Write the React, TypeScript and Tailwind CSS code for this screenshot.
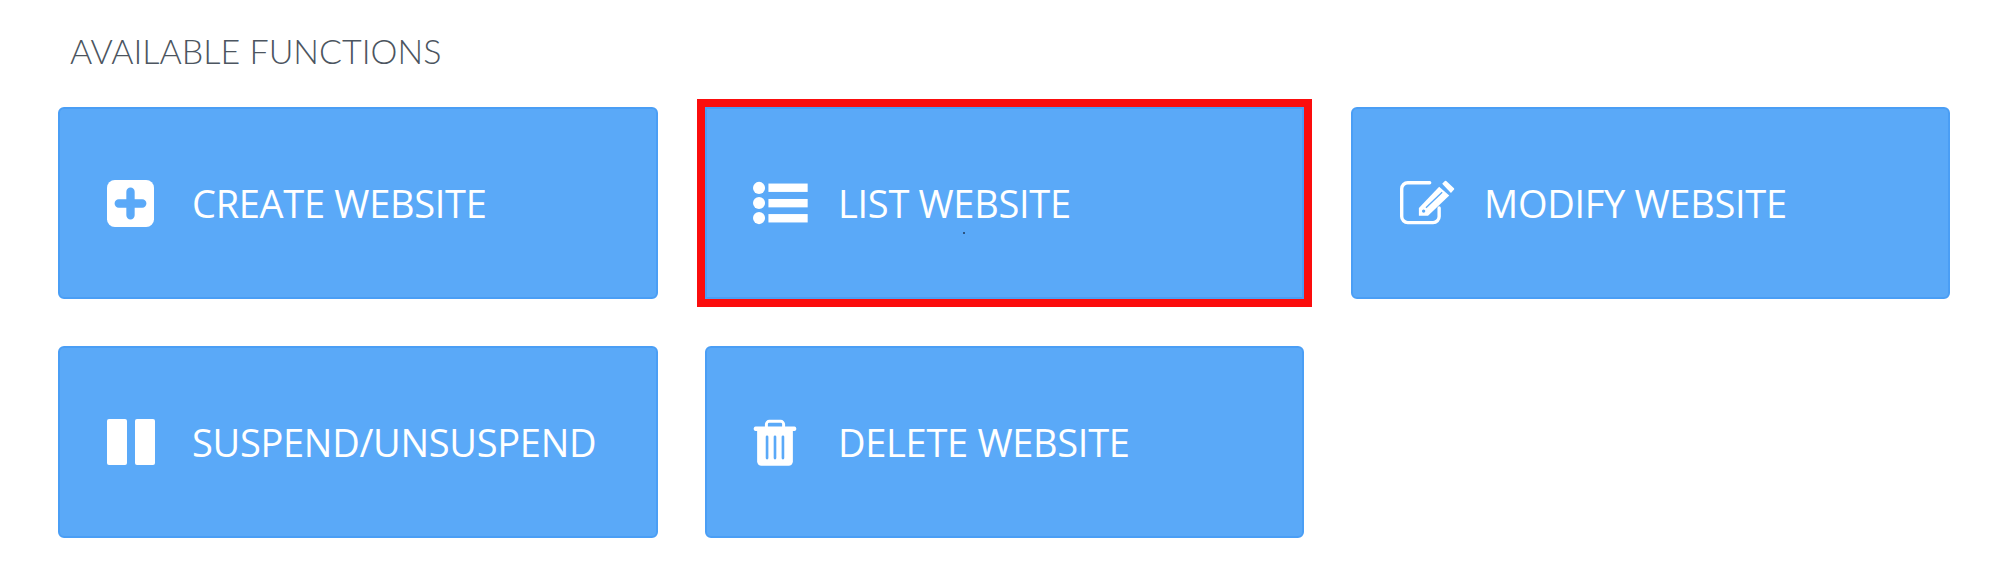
import React from "react";

const PlusIcon = () => (
  <svg viewBox="0 0 48 48" className="w-[47px] h-[47px]" fill="none">
    <rect x="0" y="0" width="48" height="48" rx="8" fill="#fff" />
    <path d="M24 12v24M12 24h24" stroke="#5aa9f8" strokeWidth="8.500" strokeLinecap="round" />
  </svg>
);

const ListIcon = () => (
  <svg viewBox="42 50 164 130" className="w-[55px] h-[44px]" fill="#fff">
    <circle cx="60" cy="70" r="18" />
    <circle cx="60" cy="115" r="18" />
    <circle cx="60" cy="160" r="18" />
    <rect x="88" y="57" width="117" height="25" />
    <rect x="88" y="103" width="117" height="25" />
    <rect x="88" y="148" width="117" height="25" />
  </svg>
);

const EditIcon = () => (
  <svg viewBox="44 42 166 136" className="w-[56px] h-[46px]" fill="none">
    <path
      d="M135 50H70a18 18 0 0 0-18 18v82a18 18 0 0 0 18 18h75a18 18 0 0 0 18-18v-25"
      stroke="#fff"
      strokeWidth="10"
      strokeLinecap="round"
    />
    <path d="M172 53 180 45a3 3 0 0 1 4 0L207 66a3 3 0 0 1 0 4L198 80Z" fill="#fff" />
    <path d="M163 62 193 88 130 148H103V125Z" fill="#fff" />
    <path d="M124 124 172 78" stroke="#5aa9f8" strokeWidth="4" />
    <circle cx="117" cy="134" r="5" fill="#5aa9f8" />
  </svg>
);

const PauseIcon = () => (
  <div className="flex gap-[8px]">
    <div className="w-[20px] h-[46px] bg-white rounded-[2px]" />
    <div className="w-[20px] h-[46px] bg-white rounded-[2px]" />
  </div>
);

const TrashIcon = () => (
  <svg viewBox="40 44 132 142" className="w-[44px] h-[47px]" fill="none">
    <path d="M80 70V60a9 9 0 0 1 9-9h34a9 9 0 0 1 9 9v10" stroke="#fff" strokeWidth="9" />
    <rect x="42" y="67" width="128" height="13" rx="5" fill="#fff" />
    <path d="M52 76H160V172a13 13 0 0 1-13 13H65a13 13 0 0 1-13-13Z" fill="#fff" />
    <path d="M82 98v64M106 98v64M130 98v64" stroke="#5aa9f8" strokeWidth="8" strokeLinecap="round" />
  </svg>
);

const functions = [
  { label: "CREATE WEBSITE", icon: <PlusIcon /> },
  { label: "LIST WEBSITE", icon: <ListIcon />, highlighted: true },
  { label: "MODIFY WEBSITE", icon: <EditIcon /> },
  { label: "SUSPEND/UNSUSPEND", icon: <PauseIcon /> },
  { label: "DELETE WEBSITE", icon: <TrashIcon /> },
];

export default function App() {
  return (
    <div className="w-[1999px] h-[587px] bg-white overflow-hidden pl-[58px] pt-[31px] font-['Open_Sans',sans-serif]">
      <h3 className="ml-[12px] h-[39px] text-[34px] leading-[39px] font-light text-[#4c5560] font-['Lato',sans-serif]">
        AVAILABLE FUNCTIONS
      </h3>
      <div className="mt-[37px] grid grid-cols-[600px_599px_599px] gap-x-[47px] gap-y-[47px]">
        {functions.map((item) => (
          <div
            key={item.label}
            className={`relative flex items-center h-[192px] pl-[48px] [&:nth-child(3n+1)]:pl-[49px] bg-[#5aa9f8] border-2 border-[#4a9ef5] ${
              item.highlighted ? "outline-[8px] outline-[#fb0d0d]" : "rounded-[6px]"
            }`}
          >
            <div className="w-[85px] -ml-[2px] flex items-center shrink-0">{item.icon}</div>
            <span className="text-[38px] leading-none font-medium text-white tracking-[-0.3px]">{item.label}</span>
            {item.highlighted && (
              <div className="absolute left-[256px] top-[123px] w-[2px] h-[2px] rounded-full bg-[#1f3a5c]" />
            )}
          </div>
        ))}
      </div>
    </div>
  );
}
